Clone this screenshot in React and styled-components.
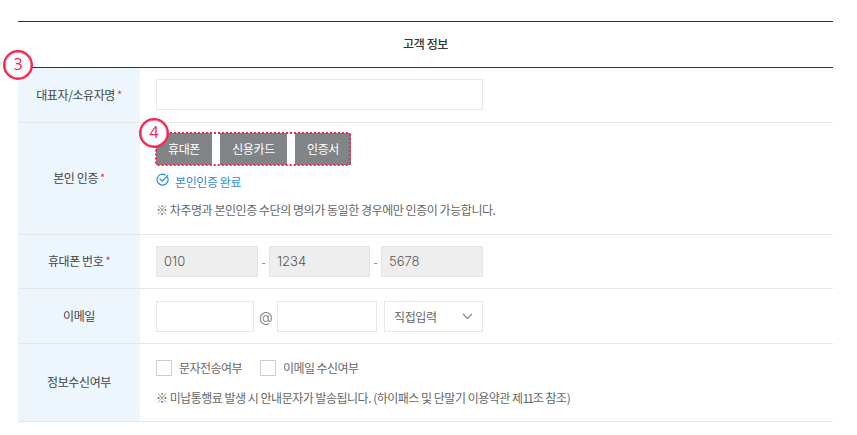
import React from "react";
import styled, { createGlobalStyle } from "styled-components";

const GlobalStyle = createGlobalStyle`
  html, body {
    margin: 0;
    padding: 0;
    background: #fff;
  }
  body {
    font-family: "Noto Sans CJK KR", "Noto Sans", sans-serif;
    color: #444;
    letter-spacing: -0.4px;
  }
`;

const App = () => {
  return (
    <>
      <GlobalStyle />
      <Page>
        <FormTitle>고객 정보</FormTitle>
        <Table>
          <Marker $left={-15} $top={-18}>3</Marker>
          <Row $height={54}>
            <Label>
              대표자/소유자명<Required>*</Required>
            </Label>
            <Content $raise={1}>
              <TextInput $width={327} />
            </Content>
          </Row>
          <Row $height={111}>
            <Label>
              본인 인증<Required>*</Required>
            </Label>
            <AuthContent>
              <AuthButtons>
                <Marker $left={-17} $top={-15}>4</Marker>
                <AuthButton $width={56}>휴대폰</AuthButton>
                <AuthButton $width={67}>신용카드</AuthButton>
                <AuthButton $width={56}>인증서</AuthButton>
              </AuthButtons>
              <Verified>
                <svg width="13" height="13" viewBox="0 0 13 13" fill="none">
                  <path
                    d="M11.6 4.4A5.5 5.5 0 1 1 9.4 1.9"
                    stroke="#2e8bdc"
                    strokeWidth="1.2"
                    strokeLinecap="round"
                  />
                  <path
                    d="M3.8 5.6l2.5 2.5 5.4-5.6"
                    stroke="#2e8bdc"
                    strokeWidth="1.2"
                    strokeLinecap="round"
                    strokeLinejoin="round"
                  />
                </svg>
                <span>본인인증 완료</span>
              </Verified>
              <Note $top={11}>※ 차주명과 본인인증 수단의 명의가 동일한 경우에만 인증이 가능합니다.</Note>
            </AuthContent>
          </Row>
          <Row $height={53}>
            <Label>
              휴대폰 번호<Required>*</Required>
            </Label>
            <Content>
              <PhoneField $width={102}>010</PhoneField>
              <Dash>-</Dash>
              <PhoneField $width={101}>1234</PhoneField>
              <Dash>-</Dash>
              <PhoneField $width={102}>5678</PhoneField>
            </Content>
          </Row>
          <Row $height={54}>
            <Label>이메일</Label>
            <Content>
              <TextInput $width={98} />
              <At>@</At>
              <TextInput $width={100} />
              <SelectBox>
                <span>직접입력</span>
                <svg width="11" height="7" viewBox="0 0 11 7" fill="none">
                  <path d="M1 1l4.5 4.5L10 1" stroke="#888" strokeWidth="1.1" />
                </svg>
              </SelectBox>
            </Content>
          </Row>
          <Row $height={77}>
            <Label>정보수신여부</Label>
            <ConsentContent>
              <Checks>
                <Check>
                  <CheckBox />
                  문자전송여부
                </Check>
                <Check>
                  <CheckBox />
                  이메일 수신여부
                </Check>
              </Checks>
              <Note $top={14} $tight>
                ※ 미납통행료 발생 시 안내문자가 발송됩니다. (하이패스 및 단말기 이용약관 제<Narrow>11</Narrow>조 참조)
              </Note>
            </ConsentContent>
          </Row>
        </Table>
      </Page>
    </>
  );
};

export default App;

const Page = styled.div`
  width: 815px;
  margin: 21px 0 0 18px;
  border-top: 1px solid #333;
`;

const FormTitle = styled.h4`
  margin: 0;
  height: 45px;
  font-size: 12px;
  font-weight: 500;
  line-height: 43px;
  text-align: center;
  color: #333;
`;

const Table = styled.div`
  position: relative;
  border-top: 1px solid #333;
`;

const Row = styled.div`
  display: flex;
  height: ${(p) => p.$height}px;
  border-bottom: 1px solid #e6e6e6;
`;

const Label = styled.div`
  box-sizing: border-box;
  display: flex;
  align-items: center;
  justify-content: center;
  flex: none;
  width: 122px;
  padding-bottom: 2px;
  background: #edf6fd;
  font-size: 12px;
  color: #444;
`;

const Required = styled.span`
  margin-left: 2px;
  color: #f0284a;
  font-size: 11px;
  line-height: 1;
`;

const Content = styled.div`
  box-sizing: border-box;
  display: flex;
  align-items: center;
  flex: 1;
  padding: 0 0 ${(p) => p.$raise || 0}px 16px;
`;

const AuthContent = styled.div`
  flex: 1;
  padding: 10px 0 0 16px;
`;

const ConsentContent = styled.div`
  flex: 1;
  padding: 15px 0 0 16px;
`;

const TextInput = styled.div`
  box-sizing: border-box;
  width: ${(p) => p.$width}px;
  height: 31px;
  border: 1px solid #e8e8e8;
  background: #fff;
`;

const AuthButtons = styled.div`
  position: relative;
  display: inline-flex;
  gap: 8px;
  vertical-align: top;

  &::after {
    content: "";
    position: absolute;
    inset: -1px 0 -1px -1px;
    border: 2px dotted #f4254d;
    border-radius: 3px;
    pointer-events: none;
  }
`;

const AuthButton = styled.div`
  width: ${(p) => p.$width}px;
  height: 32px;
  background: #808487;
  color: #fff;
  font-size: 12px;
  line-height: 32px;
  text-align: center;
`;

const Verified = styled.div`
  display: flex;
  align-items: center;
  gap: 6px;
  margin-top: 6px;
  height: 20px;
  font-size: 12px;
  color: #2e8bdc;

  svg {
    transform: translateY(-2px);
  }
`;

const Note = styled.div`
  margin-top: ${(p) => p.$top}px;
  font-size: 12px;
  letter-spacing: ${(p) => (p.$tight ? "-0.5px" : "-0.45px")};
  line-height: 16px;
  color: #666;
`;

const Narrow = styled.span`
  letter-spacing: -2px;
  margin-right: 1px;
`;

const PhoneField = styled.div`
  box-sizing: border-box;
  width: ${(p) => p.$width}px;
  height: 31px;
  padding-left: 7px;
  border: 1px solid #e4e4e4;
  background: #eeeeee;
  font-family: "Inter", sans-serif;
  font-size: 13px;
  font-weight: 300;
  letter-spacing: 0;
  line-height: 29px;
  color: #555;
`;

const Dash = styled.span`
  width: 11px;
  text-align: center;
  font-size: 12px;
  color: #888;
`;

const At = styled.span`
  width: 23px;
  text-align: center;
  font-family: "Inter", sans-serif;
  font-size: 14px;
  font-weight: 300;
  color: #666;
`;

const SelectBox = styled.div`
  box-sizing: border-box;
  display: flex;
  align-items: center;
  justify-content: space-between;
  width: 99px;
  height: 31px;
  margin-left: 7px;
  padding: 0 9px;
  border: 1px solid #e8e8e8;
  font-size: 12px;
  color: #666;
`;

const Checks = styled.div`
  display: flex;
  gap: 18px;
`;

const Check = styled.label`
  display: flex;
  align-items: center;
  gap: 7px;
  font-size: 12px;
  letter-spacing: -0.55px;
  color: #666;
`;

const CheckBox = styled.span`
  box-sizing: border-box;
  width: 16px;
  height: 16px;
  border: 1px solid #ccc;
  background: #fff;
`;

const Marker = styled.span`
  position: absolute;
  left: ${(p) => p.$left}px;
  top: ${(p) => p.$top}px;
  z-index: 2;
  box-sizing: border-box;
  width: 30px;
  height: 30px;
  border: 2px solid #f4254d;
  border-radius: 50%;
  box-shadow: inset 0 0 0 0.5px #f4254d;
  background: #fff;
  color: #f4254d;
  font-family: "Open Sans", sans-serif;
  font-size: 16px;
  letter-spacing: 0;
  line-height: 25px;
  text-align: center;
`;
